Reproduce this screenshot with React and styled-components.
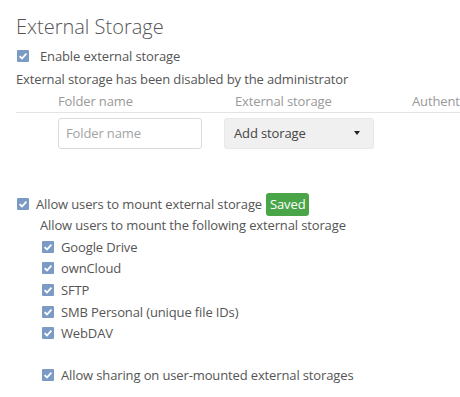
import React from 'react'
import styled, { createGlobalStyle } from 'styled-components'

const Global = createGlobalStyle`
  html, body {
    margin: 0;
    padding: 0;
    background: #fff;
    overflow: hidden;
  }
  * {
    box-sizing: border-box;
  }
`

const Section = styled.div`
  padding: 12px 0 0 16px;
  font-family: "Open Sans", "Liberation Sans", sans-serif;
  font-size: 13px;
  letter-spacing: -0.13px;
  color: #555;
  width: 700px;
`

const Title = styled.h2`
  margin: 0 0 3px;
  font-size: 20px;
  font-weight: 300;
  line-height: 30px;
  letter-spacing: 0;
  color: #555;
`

const Row = styled.label`
  display: flex;
  align-items: center;
  height: ${p => p.$h || 22}px;
  padding-left: ${p => p.$indent || 1}px;
  gap: ${p => p.$gap || 7}px;
  margin-top: ${p => p.$top || 0}px;
`

const Box = styled.span`
  width: 12px;
  height: 12px;
  border-radius: 1px;
  background: #7c9bc4;
  display: inline-flex;
  align-items: center;
  justify-content: center;
  flex: none;
`

const Text = styled.div`
  height: ${p => p.$h || 22}px;
  line-height: ${p => p.$h || 22}px;
  padding-left: ${p => p.$indent || 0}px;
  position: relative;
  top: ${p => p.$shift || 0}px;
`

const Grid = styled.div`
  display: grid;
  grid-template-columns: 42px 166px 187px 1fr;
  align-items: center;
`

const HeadRow = styled(Grid)`
  height: 24px;
  border-bottom: 1px solid #e3e3e3;
  color: #999;
`

const HeadCell = styled.div`
  padding-left: ${p => p.$pad || 0}px;
  white-space: nowrap;
`

const BodyRow = styled(Grid)`
  padding-top: 4px;
  height: 36px;
`

const Input = styled.div`
  width: 144px;
  height: 31px;
  border: 1px solid #dbdbdb;
  border-radius: 3px;
  padding-left: 7px;
  display: flex;
  align-items: center;
  color: #a3a3a3;
`

const Select = styled.div`
  width: 150px;
  height: 31px;
  border: 1px solid #e8e8e8;
  border-radius: 3px;
  background: #f0f0f0;
  padding: 0 13px 0 9px;
  display: flex;
  align-items: center;
  justify-content: space-between;
  color: #444;
`

const Caret = styled.span`
  width: 0;
  height: 0;
  border-left: 3.5px solid transparent;
  border-right: 3.5px solid transparent;
  border-top: 4px solid #222;
`

const Badge = styled.span`
  background: #4aa549;
  color: #fff;
  border-radius: 3px;
  padding: 0 4px;
  height: 23px;
  line-height: 23px;
  margin-left: -3px;
`

const Check = () => (
  <Box>
    <svg width="10" height="10" viewBox="0 0 10 10">
      <path d="M1.6 5.2 L4 7.5 L8.4 2.6" fill="none" stroke="#fff" strokeWidth="1.8" />
    </svg>
  </Box>
)

const backends = ['Google Drive', 'ownCloud', 'SFTP', 'SMB Personal (unique file IDs)', 'WebDAV']

export default function App() {
  return (
    <>
      <Global />
      <Section>
        <Title>External Storage</Title>
        <Row $gap={11}><Check />Enable external storage</Row>
        <Text $shift={1}>External storage has been disabled by the administrator</Text>
        <HeadRow>
          <span />
          <HeadCell>Folder name</HeadCell>
          <HeadCell $pad={11}>External storage</HeadCell>
          <HeadCell $pad={1}>Authentication</HeadCell>
        </HeadRow>
        <BodyRow>
          <span />
          <Input>Folder name</Input>
          <Select>Add storage<Caret /></Select>
        </BodyRow>
        <Row $top={44} $gap={7}><Check />Allow users to mount external storage <Badge>Saved</Badge></Row>
        <Text $indent={24} $h={21}>Allow users to mount the following external storage</Text>
        {backends.map(b => (
          <Row key={b} $indent={26} $h={21.6}><Check />{b}</Row>
        ))}
        <Row $indent={26} $h={21.6} $top={20}><Check />Allow sharing on user-mounted external storages</Row>
      </Section>
    </>
  )
}
